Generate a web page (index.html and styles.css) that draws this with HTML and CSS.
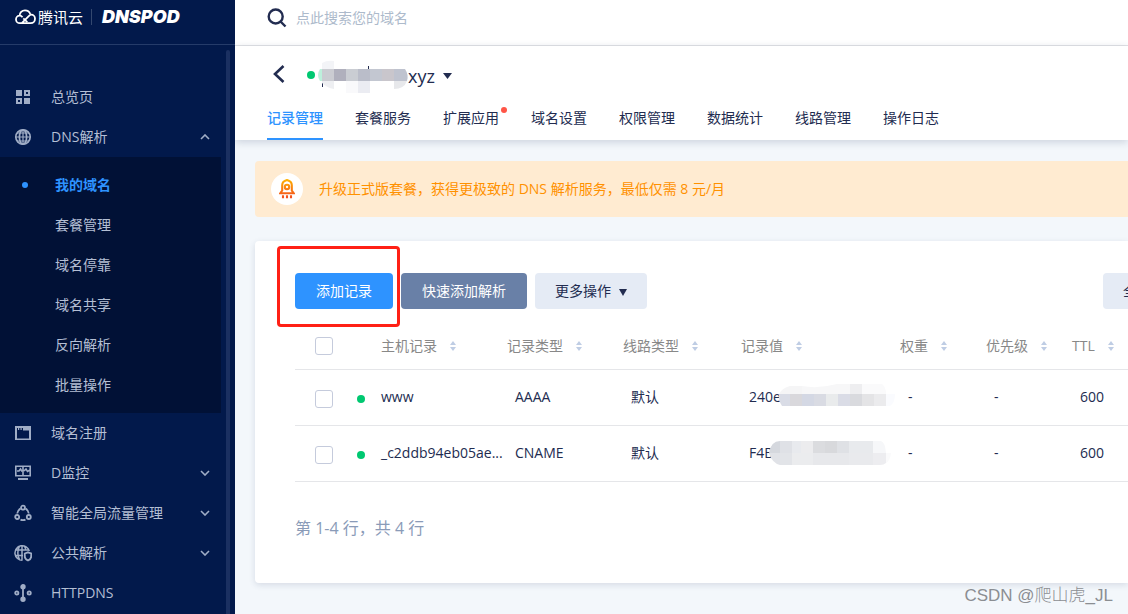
FILE: index.html
```html
<!DOCTYPE html>
<html lang="zh-CN">
<head>
<meta charset="utf-8">
<title>记录管理 - DNSPod</title>
<link rel="stylesheet" href="styles.css">
</head>
<body>
<div class="app">
  <aside class="sidebar">
    <div class="brand">
      <svg class="brand-cloud" width="21" height="16" viewBox="0 0 21 16" fill="none" stroke="#fff" stroke-width="1.8"><path d="M4.6 6.7C4.6 3.6 6.9 1.3 10 1.3c2.500 0 4.500 1.400 5.300 3.700"/><path d="M7.500 8.200C6.600 7 5.700 6.600 4.600 6.700 2.500 6.700 1 8.400 1 10.400c0 2.200 1.700 3.800 3.900 3.800h1.900l7.200-7.300c.7-.8 1.400-1.200 2.200-1.200 2.100 0 3.800 1.800 3.800 4 0 2.500-1.700 4.500-4.300 4.500H7"/><path d="M8.300 9.400l4 3.700"/></svg>
      <span class="brand-name">腾讯云</span>
      <span class="brand-product">DNSPOD</span>
    </div>
    <div class="side-body">
      <nav class="menu">
        <a class="item" href="#"><svg class="icon" viewBox="0 0 18 18" fill="#a0adc6"><path d="M2 2h6v6H2zM10 10h6v6h-6z"/><path fill-rule="evenodd" d="M10 2h6v6h-6zM12 4v2h2V4zM2 10h6v6H2zM4 12v2h2v-2z"/></svg><span class="label">总览页</span></a>
        <a class="item" href="#"><svg class="icon" viewBox="0 0 18 18" fill="none" stroke="#a0adc6" stroke-width="1.700"><circle cx="9" cy="9" r="7.200"/><ellipse cx="9" cy="9" rx="3.600" ry="7.200"/><path d="M9 2v14M2 9h14M3.200 5h11.600M3.200 13h11.600" stroke-width="1.200"/></svg><span class="label">DNS解析</span><svg class="chev" viewBox="0 0 10 6"><path d="M1 5l4-4 4 4"/></svg></a>
        <div class="submenu">
          <a class="sub active" href="#">我的域名</a>
          <a class="sub" href="#">套餐管理</a>
          <a class="sub" href="#">域名停靠</a>
          <a class="sub" href="#">域名共享</a>
          <a class="sub" href="#">反向解析</a>
          <a class="sub" href="#">批量操作</a>
        </div>
        <a class="item" href="#"><svg class="icon" viewBox="0 0 18 18"><path fill="#a0adc6" fill-rule="evenodd" d="M1 2h16v14H1zM3 6.500v8h12v-8H9V4H7.700v2H6.500V4H5.200v2H4V4H3z"/></svg><span class="label">域名注册</span></a>
        <a class="item" href="#"><svg class="icon" viewBox="0 0 18 18" fill="none" stroke="#a0adc6" stroke-width="1.600"><path d="M1.800 2.200h14.400v9.500H1.800zM9 2v10M3 7h2l1.500-2L8 7.500M10 7l2-2 1.500 2.500L16 6"/><path d="M4 15h10" stroke-width="2"/></svg><span class="label">D监控</span><svg class="chev" viewBox="0 0 10 6"><path d="M1 1l4 4 4-4"/></svg></a>
        <a class="item" href="#"><svg class="icon" viewBox="0 0 18 18" fill="none" stroke="#a0adc6" stroke-width="1.800"><circle cx="9" cy="3.700" r="2"/><circle cx="3.200" cy="13" r="2"/><circle cx="14.800" cy="13" r="2"/><path d="M6.500 4.500C4.500 5.800 3.400 7.500 3.200 9.500M11.500 4.500c2 1.300 3.100 3 3.300 5M6.500 15.600c1.700.8 3.300.8 5 0"/></svg><span class="label">智能全局流量管理</span><svg class="chev" viewBox="0 0 10 6"><path d="M1 1l4 4 4-4"/></svg></a>
        <a class="item" href="#"><svg class="icon" viewBox="0 0 18 18" fill="none" stroke="#a0adc6" stroke-width="1.500"><path d="M15.300 7A7.300 7.300 0 1 0 8.500 16.300M8 1.800v14M5.500 2.200c-2 4-2 9.500 0 13.500M10.500 2.200c.8 1.500 1.200 3 1.300 4.500M1 6h13.500M1 11.500h8"/><path d="M14 8.300l3.200 1.200v3c0 2-1.300 3.200-3.200 4-1.900-.8-3.200-2-3.200-4v-3z" stroke-width="1.800"/></svg><span class="label">公共解析</span><svg class="chev" viewBox="0 0 10 6"><path d="M1 1l4 4 4-4"/></svg></a>
        <a class="item" href="#"><svg class="icon" viewBox="0 0 18 18" fill="none" stroke="#a0adc6" stroke-width="1.800"><path d="M9 4v10"/><circle cx="9" cy="2.800" r="1.800" fill="#a0adc6"/><circle cx="9" cy="15.200" r="1.800" fill="#a0adc6"/><circle cx="2.800" cy="9" r="1.600"/><circle cx="15.200" cy="9" r="1.600"/></svg><span class="label">HTTPDNS</span></a>
      </nav>
      <div class="scrollbar"></div>
    </div>
  </aside>

  <main class="main">
    <div class="topbar">
      <svg width="20" height="20" viewBox="0 0 20 20" fill="none" stroke="#222c50" stroke-width="2.400"><circle cx="8.700" cy="8.500" r="7"/><path d="M13.500 13.500l5 5"/></svg>
      <input class="search" type="text" placeholder="点此搜索您的域名" aria-label="搜索域名">
    </div>
    <header class="domain">
      <div class="domain-row">
        <button class="back" type="button" aria-label="返回"><svg width="12" height="18" viewBox="0 0 12 18" fill="none" stroke="#222c50" stroke-width="2.600"><path d="M10.500 1L2 9l8.500 8"/></svg></button>
        <button class="domain-pick" type="button">
          <svg class="mask-name" width="102" height="32" viewBox="0 0 102 32">
            <circle cx="5" cy="15" r="4" fill="#00c871"/>
            <path d="M62 6h1v4h-1zM16 23h1v4h-1z" fill="#222c50"/>
            <path d="M16 9V3q5-3 12-2v8z" fill="#f3f4f7"/>
            <path d="M14 9h2v12h-2q-4-6 0-12z" fill="#bdf0dc"/>
            <path d="M16 9h12v12H16z" fill="#cbccd2"/><path d="M28 9h12v12H28z" fill="#b0b0bd"/>
            <path d="M40 9h12v12H40z" fill="#cacdd3"/><path d="M52 9h12v12H52z" fill="#babdc9"/>
            <path d="M64 9h12v12H64z" fill="#c3c7d1"/><path d="M76 9h12v12H76z" fill="#c9c6cc"/>
            <path d="M88 9h11q4 6 2 12H88z" fill="#bfc3cf"/>
            <path d="M16 21h12v8q-7-1-12-6z" fill="#eeeff2"/><path d="M40 21h12v12H40z" fill="#f9f9fb"/><path d="M52 21h12v12H52z" fill="#ebecf2"/><path d="M88 21h13q-3 8-13 8z" fill="#e7e8eb"/>
          </svg>
          <span>xyz</span>
          <svg class="caret" width="9" height="6" viewBox="0 0 9 6"><path d="M0 0h9L4.500 6z" fill="#222c50"/></svg>
        </button>
      </div>
      <nav class="tabs">
        <a class="tab current" href="#">记录管理</a>
        <a class="tab" href="#">套餐服务</a>
        <a class="tab" href="#">扩展应用<i class="badge"></i></a>
        <a class="tab" href="#">域名设置</a>
        <a class="tab" href="#">权限管理</a>
        <a class="tab" href="#">数据统计</a>
        <a class="tab" href="#">线路管理</a>
        <a class="tab" href="#">操作日志</a>
      </nav>
    </header>

    <div class="content">
      <a class="banner" href="#">
        <span class="banner-icon"><svg width="16" height="20" viewBox="0 0 16 20" fill="none" stroke-width="2.100"><defs><linearGradient id="flame" gradientUnits="userSpaceOnUse" x1="0" y1="0" x2="0" y2="18"><stop offset="0" stop-color="#ffb400"/><stop offset="1" stop-color="#f4511e"/></linearGradient></defs><g stroke="url(#flame)"><path d="M3.200 11.500V6.200C3.200 3.300 5.500 1.800 8 1.100c2.500.7 4.800 2.200 4.800 5.100v5.300l2 2.800H1.200z"/><circle cx="8" cy="8" r="2.200"/><path d="M4 16.200v3M8 16.200v3M12 16.200v3"/></g></svg></span>
        <span>升级正式版套餐，获得更极致的 DNS 解析服务，最低仅需 8 元/月</span>
      </a>

      <section class="card">
        <div class="toolbar">
          <div class="marked"><button class="btn primary" type="button">添加记录</button><div class="mark"></div></div>
          <button class="btn slate" type="button">快速添加解析</button>
          <button class="btn light" type="button">更多操作<svg class="caret" width="8" height="7" viewBox="0 0 8 7"><path d="M0 0h8L4 7z" fill="#222c50"/></svg></button>
          <button class="btn light filter" type="button">全</button>
        </div>
        <table class="records">
          <colgroup><col class="c-check"><col class="c-dot"><col class="c-host"><col class="c-type"><col class="c-line"><col class="c-value"><col class="c-num"><col class="c-num"><col></colgroup>
          <thead>
            <tr>
              <th><input class="check" type="checkbox" aria-label="全选"></th><th></th>
              <th>主机记录<svg class="sort" viewBox="0 0 6 10"><path d="M0 4l3-4 3 4zM0 6h6l-3 4z"/></svg></th>
              <th>记录类型<svg class="sort" viewBox="0 0 6 10"><path d="M0 4l3-4 3 4zM0 6h6l-3 4z"/></svg></th>
              <th>线路类型<svg class="sort" viewBox="0 0 6 10"><path d="M0 4l3-4 3 4zM0 6h6l-3 4z"/></svg></th>
              <th>记录值<svg class="sort" viewBox="0 0 6 10"><path d="M0 4l3-4 3 4zM0 6h6l-3 4z"/></svg></th>
              <th>权重<svg class="sort" viewBox="0 0 6 10"><path d="M0 4l3-4 3 4zM0 6h6l-3 4z"/></svg></th>
              <th>优先级<svg class="sort" viewBox="0 0 6 10"><path d="M0 4l3-4 3 4zM0 6h6l-3 4z"/></svg></th>
              <th>TTL<svg class="sort" viewBox="0 0 6 10"><path d="M0 4l3-4 3 4zM0 6h6l-3 4z"/></svg></th>
            </tr>
          </thead>
          <tbody>
            <tr>
              <td><input class="check" type="checkbox" aria-label="选择 www"></td><td><i class="status"></i></td>
              <td class="host">www</td><td>AAAA</td><td>默认</td>
              <td><div class="value"><span>240e</span><svg class="mask first" width="116" height="24" viewBox="0 0 116 24"><path d="M0 9Q3 3 11 1h12v8z" fill="#f5f5f6"/><path d="M23 9V1q16 3 35-2h13v10z" fill="#f7f7f8"/><path d="M71-1h12V9H71z" fill="#eeeef0"/><path d="M83-1h20q4 3 4 10H83z" fill="#fafafb"/><path d="M0 9h11v12H3Q-1 15 0 9z" fill="#d9dce6"/><path d="M11 9h12v12H11z" fill="#d9d8dc"/><path d="M23 9h12v12H23z" fill="#d4d8e4"/><path d="M35 9h12v12H35z" fill="#d9dbe3"/><path d="M47 9h12v12H47z" fill="#e9ebec"/><path d="M59 9h12v12H59z" fill="#dadce6"/><path d="M71 9h12v12H71z" fill="#d9dade"/><path d="M83 9h12v12H83z" fill="#e4e4e6"/><path d="M95 9h12v12H95z" fill="#ebebed"/><path d="M107 9h9q0 9-5 12h-4z" fill="#fafbfe"/></svg></div></td>
              <td>-</td><td>-</td><td>600</td>
            </tr>
            <tr>
              <td><input class="check" type="checkbox" aria-label="选择 _c2ddb94eb05ae"></td><td><i class="status"></i></td>
              <td class="host">_c2ddb94eb05ae...</td><td>CNAME</td><td>默认</td>
              <td><div class="value"><span>F4B</span><svg class="mask second" width="122" height="24" viewBox="0 0 122 24"><path d="M0 12Q2 0 11 0v12z" fill="#d5d8de"/><path d="M0 12h11v12Q3 22 0 12z" fill="#e0e2e7"/><path d="M11 0h12v12H11z" fill="#dfe1e6"/><path d="M11 12h12v12H11z" fill="#e2e4e8"/><path d="M23 0h9v12h-9z" fill="#e8eaee"/><path d="M32 0h12v12H32z" fill="#ececee"/><path d="M23 12h21v12H23z" fill="#ebecee"/><path d="M44 0h12v12H44z" fill="#dbdcdf"/><path d="M56 0h12v12H56z" fill="#d8d9dc"/><path d="M68 0h12v12H68z" fill="#dfe1e5"/><path d="M44 12h36v12H44z" fill="#e7e8eb"/><path d="M80 0h24v12H80z" fill="#e8eaed"/><path d="M80 12h24v12H80z" fill="#e9eaed"/><path d="M104 0h8q4 1 5 12h-13z" fill="#f6f7f9"/><path d="M104 12h13v10q-2 2-6 2h-7z" fill="#ededf0"/><path d="M117 12h5q-1 8-5 10z" fill="#fafafb"/></svg></div></td>
              <td>-</td><td>-</td><td>600</td>
            </tr>
          </tbody>
        </table>
        <p class="summary">第 1-4 行，共 4 行</p>
      </section>
    </div>
    <div class="watermark">CSDN @爬山虎_JL</div>
  </main>
</div>
</body>
</html>
```

FILE: styles.css
```css
* { box-sizing: border-box; }
body {
  margin: 0;
  font-family: "Open Sans", "Noto Sans CJK SC", sans-serif;
  font-size: 14px;
  line-height: 20px;
  color: #222c50;
  overflow: hidden;
}
a { color: inherit; text-decoration: none; }
button { font: inherit; color: inherit; border: 0; background: none; padding: 0; cursor: pointer; }
svg { flex: none; }

.app { display: flex; height: 100vh; }

.sidebar { flex: none; width: 235px; display: flex; flex-direction: column; background: #02194b; color: #b4bfd4; overflow: hidden; }
.brand { flex: none; height: 45px; padding: 0 0 10px 15px; display: flex; align-items: center; border-bottom: 1px solid #253b69; color: #fff; }
.brand-cloud { margin-right: 2px; }
.brand-name { font-size: 15px; padding-right: 8px; border-right: 1px solid #34486f; line-height: 16px; }
.brand-product { margin-left: 10px; font-family: Inter, sans-serif; font-weight: 900; font-style: italic; font-size: 18px; }
.side-body { flex: 1; min-height: 0; display: flex; padding-right: 5px; }
.menu { flex: 1; margin-right: 5px; padding-top: 32px; }
.scrollbar { width: 4px; margin-top: 5px; border-radius: 2px 2px 0 0; background: #1b3061; }
.item { display: flex; align-items: center; height: 40px; padding: 0 11px 0 14px; }
.icon { width: 18px; height: 18px; margin-right: 19px; }
.label { flex: 1; }
.chev { width: 10px; height: 6px; fill: none; stroke: #a0adc6; stroke-width: 1.6; }
.submenu { padding: 8px 0; background: #011136; }
.sub { display: flex; align-items: center; height: 40px; padding-left: 55px; }
.sub.active { padding-left: 22px; color: #2e93ff; font-weight: 700; }
.sub.active::before { content: ""; width: 6px; height: 6px; margin-right: 27px; border-radius: 50%; background: #2e93ff; }

.main { flex: 1; min-width: 0; display: flex; flex-direction: column; position: relative; overflow: hidden; background: #f3f7fb; }
.topbar { flex: none; display: flex; align-items: center; height: 46px; padding: 0 32px 10px; background: #fff; border-bottom: 1px solid #e2e3e6; }
.search { flex: 1; margin-left: 9px; border: 0; padding: 0; outline: 0; font: inherit; background: none; }
.search::placeholder { color: #adbacb; opacity: 1; }

.domain { flex: none; padding: 10px 32px 0; background: #fff; box-shadow: 0 2px 8px rgba(40, 60, 100, .2); }
.domain-row { display: flex; align-items: center; height: 40px; padding-left: 6px; }
.back { height: 18px; margin-bottom: 4px; line-height: 0; }
.domain-pick { display: flex; align-items: center; margin-left: 21px; font-size: 18px; line-height: 24px; }
.domain-pick .caret { margin-left: 8px; }
.tabs { display: flex; gap: 32px; }
.tab { position: relative; height: 44px; padding-top: 12px; border-bottom: 2px solid transparent; white-space: nowrap; }
.tab.current { color: #2e93ff; border-color: #2e93ff; font-weight: 500; }
.badge { position: absolute; top: 11px; right: -8px; width: 6px; height: 6px; border-radius: 50%; background: #ff5547; }

.content { padding: 21px 0 0 20px; }
.banner { display: flex; align-items: center; height: 56px; padding-left: 16px; border-radius: 4px 0 0 4px; background: #ffebd1; color: #ff9100; }
.banner-icon { display: flex; align-items: center; justify-content: center; width: 32px; height: 32px; margin-right: 16px; border-radius: 50%; background: #fff; }

.card { margin-top: 24px; padding: 32px 0 43px 40px; border-radius: 4px 0 0 4px; background: #fff; box-shadow: 0 2px 6px rgba(40, 60, 100, .14); }
.toolbar { display: flex; gap: 8px; }
.marked { position: relative; }
.mark { position: absolute; top: -27px; right: -7px; bottom: -18px; left: -18px; border: 3px solid #ff2015; border-radius: 4px; pointer-events: none; }
.btn { height: 36px; padding: 0 20px; border-radius: 4px; white-space: nowrap; }
.primary { width: 98px; background: #2e93ff; color: #fff; }
.slate { width: 126px; background: #6980a7; color: #fff; }
.light { background: #e5ebf5; }
.light .caret { margin-left: 8px; }
.filter { margin: 0 -29px 0 auto; }

.records { width: 100%; margin-top: 14px; border-collapse: collapse; table-layout: fixed; }
.c-check { width: 62px; }
.c-dot { width: 24px; }
.c-host { width: 126px; }
.c-type { width: 116px; }
.c-line { width: 118px; }
.c-value { width: 159px; }
.c-num { width: 86px; }
.records th { height: 46px; padding: 0; text-align: left; font-weight: 400; color: #888; white-space: nowrap; border-bottom: 1px solid #e5e6e9; }
.records td { height: 56px; padding: 0 0 0 8px; white-space: nowrap; border-bottom: 1px solid #e5e6e9; }
.records td:first-child, .records th:first-child { padding-left: 20px; }
.records td:nth-child(2), .records td.host { padding-left: 0; }
.records td:nth-child(-n+2) { padding-top: 4px; }
.sort { width: 6px; height: 10px; margin-left: 13px; fill: #bfcde4; }
.check { appearance: none; display: block; width: 18px; height: 18px; margin: 0; border: 1px solid #c5cbdc; border-radius: 3px; background: #fff; }
.status { display: block; width: 8px; height: 8px; border-radius: 50%; background: #00c871; }
.value { display: flex; align-items: center; }
.mask, .mask-name { overflow: visible; }
.first { margin-left: -2px; }
.second { margin-left: -4px; }
.summary { margin: 34px 0 0; font-size: 16px; line-height: 24px; color: #8a9bb8; }

.watermark { position: absolute; right: 15px; bottom: 6px; font-family: "Liberation Sans", "Noto Sans CJK SC", sans-serif; font-weight: 300; font-size: 17px; line-height: 24px; color: #8b8e92; }
```
